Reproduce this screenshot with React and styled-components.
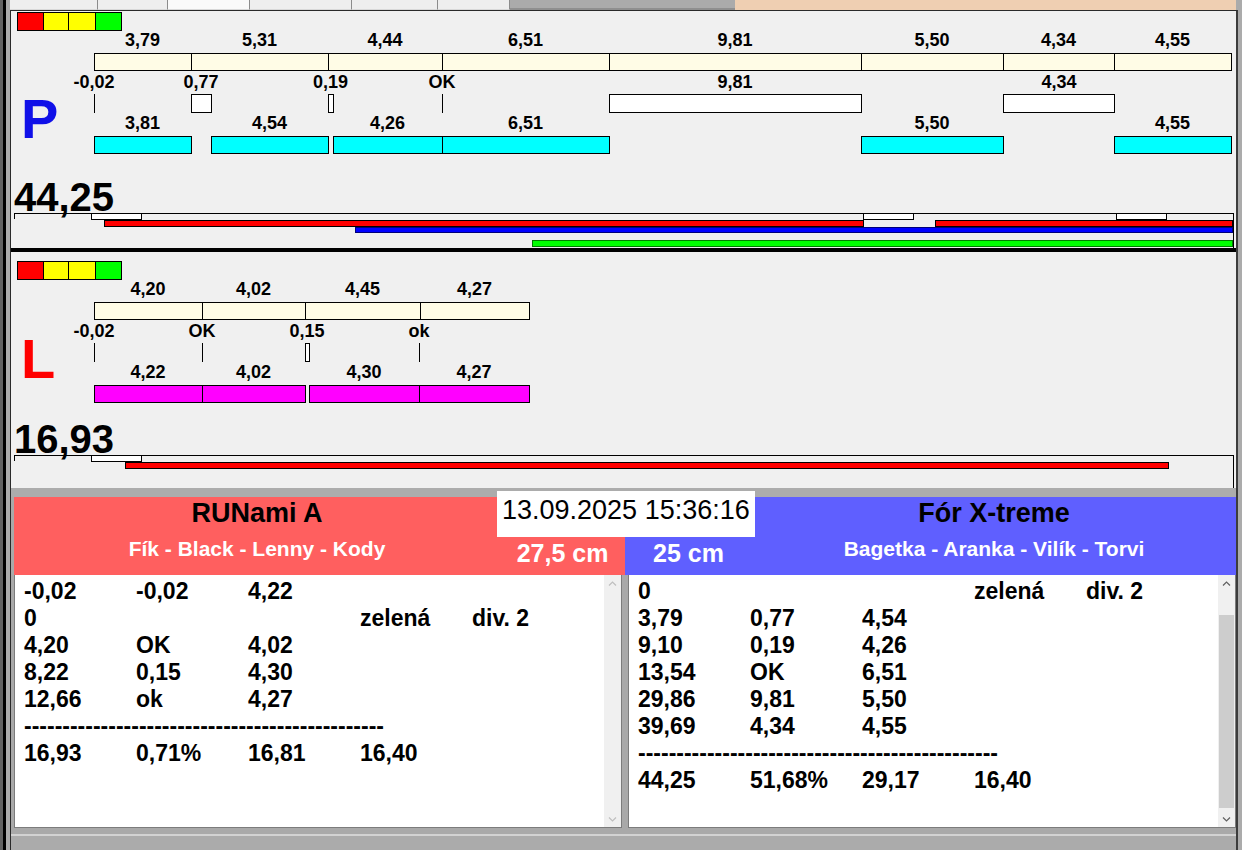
import React from "react";
import styled, { createGlobalStyle } from "styled-components";

const SCALE = 25.7;
const px = (v) => Math.round(v * SCALE);
const fmt = (v) => v.toFixed(2).replace(".", ",");

const lanes = [
  {
    id: "P",
    color: "#1010e8",
    total: "44,25",
    height: 241,
    padTop: 1,
    drop: 60,
    totalH: 57,
    lineH: 35,
    heavy: true,
    top: [3.79, 5.31, 4.44, 6.51, 9.81, 5.5, 4.34, 4.55],
    marks: [
      { at: 0, w: 0, label: "-0,02" },
      { at: 3.79, w: 0.77, label: "0,77" },
      { at: 9.1, w: 0.19, label: "0,19" },
      { at: 13.54, w: 0, label: "OK" },
      { at: 20.05, w: 9.81, label: "9,81" },
      { at: 35.36, w: 4.34, label: "4,34" },
    ],
    bottomColor: "#00ffff",
    bottom: [
      { from: 0, to: 3.79, label: "3,81" },
      { from: 4.56, to: 9.1, label: "4,54" },
      { from: 9.29, to: 13.54, label: "4,26" },
      { from: 13.54, to: 20.05, label: "6,51" },
      { from: 29.86, to: 35.36, label: "5,50" },
      { from: 39.7, to: 44.25, label: "4,55" },
    ],
    boxes: [77, 849, 1102],
    runs: [
      { left: 90, width: 760, top: 6, h: 7, bg: "#ff0000", line: "#000" },
      { left: 921, width: 298, top: 6, h: 7, bg: "#ff0000", line: "#000" },
      { left: 341, width: 878, top: 13, h: 6, bg: "#0000ff", line: "#00007a" },
      { left: 518, width: 701, top: 26, h: 7, bg: "#00ff00", line: "#007a00" },
    ],
  },
  {
    id: "L",
    color: "#ff0000",
    total: "16,93",
    height: 236,
    padTop: 9,
    drop: 51,
    totalH: 50,
    lineH: 33,
    heavy: false,
    top: [4.2, 4.02, 4.45, 4.27],
    marks: [
      { at: 0, w: 0, label: "-0,02" },
      { at: 4.2, w: 0, label: "OK" },
      { at: 8.22, w: 0.15, label: "0,15" },
      { at: 12.66, w: 0, label: "ok" },
    ],
    bottomColor: "#ff00ff",
    bottom: [
      { from: 0, to: 4.2, label: "4,22" },
      { from: 4.2, to: 8.22, label: "4,02" },
      { from: 8.37, to: 12.66, label: "4,30" },
      { from: 12.66, to: 16.93, label: "4,27" },
    ],
    boxes: [77],
    runs: [{ left: 111, width: 1044, top: 6, h: 7, bg: "#ff0000", line: "#000" }],
  },
];

const teams = [
  {
    name: "RUNami A",
    members: "Fík - Black - Lenny - Kody",
    cm: "27,5 cm",
    bg: "#ff5f5f",
    side: "right",
    thumb: null,
    rows: [
      ["-0,02", "-0,02", "4,22"],
      ["0", "", "", "zelená", "div. 2"],
      ["4,20", "OK", "4,02"],
      ["8,22", "0,15", "4,30"],
      ["12,66", "ok", "4,27"],
      "dash",
      ["16,93", "0,71%", "16,81", "16,40"],
    ],
  },
  {
    name: "Fór X-treme",
    members: "Bagetka - Aranka - Vilík - Torvi",
    cm: "25 cm",
    bg: "#5f5fff",
    side: "left",
    thumb: { top: 23, height: 193 },
    rows: [
      ["0", "", "", "zelená", "div. 2"],
      ["3,79", "0,77", "4,54"],
      ["9,10", "0,19", "4,26"],
      ["13,54", "OK", "6,51"],
      ["29,86", "9,81", "5,50"],
      ["39,69", "4,34", "4,55"],
      "dash",
      ["44,25", "51,68%", "29,17", "16,40"],
    ],
  },
];

const tabs = [88, 70, 82, 102, 86, 72];
const legend = [
  { c: "#ff0000", w: 25 },
  { c: "#ffff00", w: 24 },
  { c: "#ffff00", w: 26 },
  { c: "#00ff00", w: 25 },
];

const GlobalStyle = createGlobalStyle`
  html, body { margin: 0; padding: 0; background: #ababab; }
  body { font-family: "Liberation Sans", Arial, sans-serif; color: #000; }
`;

const Frame = styled.div`
  width: 1242px;
  height: 850px;
  box-sizing: border-box;
  padding: 0 4px 0 10px;
  display: flex;
  flex-direction: column;
  overflow: hidden;
  background: linear-gradient(to right, #626262 0 3px, #000 3px 6px, #ababab 6px);
`;

const TabStrip = styled.div`
  display: flex;
  height: 10px;
  flex: none;
`;

const Tab = styled.div`
  width: ${(p) => p.$w}px;
  box-sizing: border-box;
  background: ${(p) => (p.$active ? "#fafafa" : "#eeeeee")};
  border-right: 1px solid #8c8c8c;
  border-bottom: 1px solid #d8d8d8;
`;

const TabFill = styled.div`
  width: 225px;
  background: #ababab;
  border-bottom: 2px solid #8f8f8f;
`;

const TabPeach = styled.div`
  flex: 1;
  background: #efcfb2;
  margin-right: 2px;
`;

const Content = styled.div`
  flex: 1;
  display: flex;
  flex-direction: column;
  border-top: 1px solid #2a2a2a;
  border-left: 1px solid #2a2a2a;
  border-right: 2px solid #3c3c3c;
`;

const Lane = styled.section`
  display: flex;
  flex-direction: column;
  flex: none;
  height: ${(p) => p.$h}px;
  box-sizing: border-box;
  padding: ${(p) => p.$top}px 0 0 6px;
  background: #f0f0f0;
  border-bottom: ${(p) => (p.$heavy ? "4px solid #000" : "none")};
`;

const Legend = styled.div`
  display: flex;
  width: max-content;
  height: 19px;
  box-sizing: border-box;
  border: 1px solid #000;
`;

const LegendCell = styled.span`
  width: ${(p) => p.$w}px;
  background: ${(p) => p.$c};
  & + & {
    border-left: 1px solid #000;
  }
`;

const ChartRow = styled.div`
  display: flex;
  height: 125px;
`;

const Letter = styled.div`
  width: 77px;
  box-sizing: border-box;
  padding: ${(p) => p.$drop}px 0 0 4px;
  font-size: 56px;
  line-height: 56px;
  font-weight: bold;
  color: ${(p) => p.$color};
`;

const Chart = styled.div`
  position: relative;
  flex: 1;
`;

const Tag = styled.span`
  position: absolute;
  top: ${(p) => p.$y}px;
  transform: translateX(-50%);
  font-size: 18px;
  font-weight: bold;
  line-height: 18px;
  white-space: nowrap;
`;

const Bar = styled.div`
  position: absolute;
  top: ${(p) => p.$y}px;
  height: ${(p) => p.$h}px;
  box-sizing: border-box;
  border: 1px solid ${(p) => p.$line || "#000"};
  background: ${(p) => p.$bg};
`;

const Tick = styled.div`
  position: absolute;
  top: 63px;
  width: 1px;
  height: 19px;
  background: #000;
`;

const Total = styled.div`
  height: ${(p) => p.$h}px;
  display: flex;
  align-items: flex-end;
  margin-left: -3px;
  font-size: 40px;
  line-height: 32px;
  font-weight: bold;
`;

const Timeline = styled.div`
  position: relative;
  height: ${(p) => p.$h}px;
  box-sizing: border-box;
  margin: 0 2px 0 -3px;
  border-top: 1px solid #000;
  border-right: 1px solid #000;
  &::before {
    content: "";
    position: absolute;
    left: 0;
    top: 0;
    width: 1px;
    height: 5px;
    background: #000;
  }
`;

const Gap = styled.div`
  height: 9px;
  flex: none;
  background: #acacac;
`;

const Bottom = styled.div`
  position: relative;
  display: grid;
  grid-template-columns: 611px 611px;
  height: 331px;
  flex: none;
  padding-left: 3px;
  background: #a9a9a9;
`;

const Team = styled.div`
  display: flex;
  flex-direction: column;
`;

const Header = styled.div`
  height: 78px;
  display: grid;
  grid-template-columns: ${(p) => (p.$side === "right" ? "486px 1fr" : "127px 1fr")};
  background: ${(p) => p.$bg};
`;

const Names = styled.div`
  display: flex;
  flex-direction: column;
  align-items: center;
`;

const Title = styled.div`
  font-size: 27px;
  line-height: 32px;
  font-weight: bold;
  color: #000;
`;

const Members = styled.div`
  margin-top: 8px;
  font-size: 21px;
  line-height: 24px;
  font-weight: bold;
  color: #fff;
`;

const Side = styled.div`
  display: flex;
  align-items: flex-end;
  justify-content: center;
  padding-bottom: 7px;
`;

const Cm = styled.div`
  font-size: 25px;
  line-height: 30px;
  font-weight: bold;
  color: #fff;
`;

const DateBox = styled.div`
  position: absolute;
  left: 486px;
  top: -6px;
  width: 258px;
  height: 46px;
  box-sizing: border-box;
  padding-left: 5px;
  background: #fff;
  font-size: 27px;
  line-height: 38px;
  white-space: nowrap;
`;

const ListBox = styled.div`
  flex: 1;
  display: flex;
  background: #fff;
  border: 1px solid #7c7c7c;
  border-top: none;
  margin: ${(p) => (p.$side === "right" ? "0 3px 0 0" : "0 0 0 3px")};
`;

const Lines = styled.div`
  flex: 1;
  padding: 3px 0 0 9px;
`;

const Line = styled.div`
  display: grid;
  grid-template-columns: repeat(5, 112px);
  height: 27px;
  font-size: 23px;
  line-height: 27px;
  font-weight: bold;
  white-space: nowrap;
`;

const Scroll = styled.div`
  width: 17px;
  display: flex;
  flex-direction: column;
  background: #f0f0f0;
`;

const Arrow = styled.div`
  height: 17px;
  display: flex;
  align-items: center;
  justify-content: center;
  color: ${(p) => (p.$on ? "#606060" : "#bfbfbf")};
`;

const Track = styled.div`
  position: relative;
  flex: 1;
`;

const Thumb = styled.div`
  position: absolute;
  left: 1px;
  right: 1px;
  top: ${(p) => p.$top}px;
  height: ${(p) => p.$h}px;
  background: #cdcdcd;
`;

const Status = styled.div`
  flex: 1;
  background: linear-gradient(#a9a9a9 0 6px, #d2d2d2 6px 8px, #ababab 8px);
`;

const Chevron = ({ down }) => (
  <svg width="9" height="6" viewBox="0 0 9 6">
    <path
      d={down ? "M1 1.5 L4.5 5 L8 1.5" : "M1 4.5 L4.5 1 L8 4.5"}
      fill="none"
      stroke="currentColor"
      strokeWidth="1.2"
    />
  </svg>
);

const LaneView = ({ lane }) => {
  let cum = 0;
  const cream = lane.top.map((v) => {
    const start = cum;
    cum += v;
    return { start, end: cum, v };
  });
  return (
    <Lane $h={lane.height} $top={lane.padTop} $heavy={lane.heavy}>
      <Legend>
        {legend.map((l, i) => (
          <LegendCell key={i} $c={l.c} $w={l.w} />
        ))}
      </Legend>
      <ChartRow>
        <Letter $drop={lane.drop} $color={lane.color}>
          {lane.id}
        </Letter>
        <Chart>
          {cream.map((s, i) => (
            <React.Fragment key={"c" + i}>
              <Tag $y={0} style={{ left: (px(s.start) + px(s.end)) / 2 }}>
                {fmt(s.v)}
              </Tag>
              <Bar
                $y={22}
                $h={18}
                $bg="#fffce6"
                style={{ left: px(s.start), width: px(s.end) - px(s.start) + 1 }}
              />
            </React.Fragment>
          ))}
          {lane.marks.map((m, i) => (
            <React.Fragment key={"m" + i}>
              <Tag $y={42} style={{ left: px(m.at) + px(m.w) / 2 }}>
                {m.label}
              </Tag>
              {m.w > 0 ? (
                <Bar
                  $y={63}
                  $h={19}
                  $bg="#fff"
                  style={{ left: px(m.at), width: px(m.at + m.w) - px(m.at) + 1 }}
                />
              ) : (
                <Tick style={{ left: px(m.at) }} />
              )}
            </React.Fragment>
          ))}
          {lane.bottom.map((b, i) => (
            <React.Fragment key={"b" + i}>
              <Tag $y={83} style={{ left: (px(b.from) + px(b.to)) / 2 }}>
                {b.label}
              </Tag>
              <Bar
                $y={105}
                $h={18}
                $bg={lane.bottomColor}
                style={{ left: px(b.from), width: px(b.to) - px(b.from) + 1 }}
              />
            </React.Fragment>
          ))}
        </Chart>
      </ChartRow>
      <Total $h={lane.totalH}>{lane.total}</Total>
      <Timeline $h={lane.lineH}>
        {lane.boxes.map((x, i) => (
          <Bar key={"x" + i} $y={-1} $h={7} $bg="#fff" style={{ left: x, width: 51 }} />
        ))}
        {lane.runs.map((r, i) => (
          <Bar
            key={"r" + i}
            $y={r.top}
            $h={r.h}
            $bg={r.bg}
            $line={r.line}
            style={{ left: r.left, width: r.width }}
          />
        ))}
      </Timeline>
    </Lane>
  );
};

const TeamView = ({ team }) => {
  const names = (
    <Names>
      <Title>{team.name}</Title>
      <Members>{team.members}</Members>
    </Names>
  );
  const side = (
    <Side>
      <Cm>{team.cm}</Cm>
    </Side>
  );
  return (
    <Team>
      <Header $bg={team.bg} $side={team.side}>
        {team.side === "right" ? (
          <>
            {names}
            {side}
          </>
        ) : (
          <>
            {side}
            {names}
          </>
        )}
      </Header>
      <ListBox $side={team.side}>
        <Lines>
          {team.rows.map((row, i) =>
            row === "dash" ? (
              <Line key={i}>
                <span>{"-".repeat(47)}</span>
              </Line>
            ) : (
              <Line key={i}>
                {row.map((cell, j) => (
                  <span key={j}>{cell}</span>
                ))}
              </Line>
            )
          )}
        </Lines>
        <Scroll>
          <Arrow $on={!!team.thumb}>
            <Chevron />
          </Arrow>
          <Track>{team.thumb && <Thumb $top={team.thumb.top} $h={team.thumb.height} />}</Track>
          <Arrow $on={!!team.thumb}>
            <Chevron down />
          </Arrow>
        </Scroll>
      </ListBox>
    </Team>
  );
};

export default function App() {
  return (
    <>
      <GlobalStyle />
      <Frame>
        <TabStrip>
          {tabs.map((w, i) => (
            <Tab key={i} $w={w} $active={i === 2} />
          ))}
          <TabFill />
          <TabPeach />
        </TabStrip>
        <Content>
          {lanes.map((lane) => (
            <LaneView key={lane.id} lane={lane} />
          ))}
          <Gap />
          <Bottom>
            {teams.map((t) => (
              <TeamView key={t.name} team={t} />
            ))}
            <DateBox>13.09.2025 15:36:16</DateBox>
          </Bottom>
          <Status />
        </Content>
      </Frame>
    </>
  );
}
